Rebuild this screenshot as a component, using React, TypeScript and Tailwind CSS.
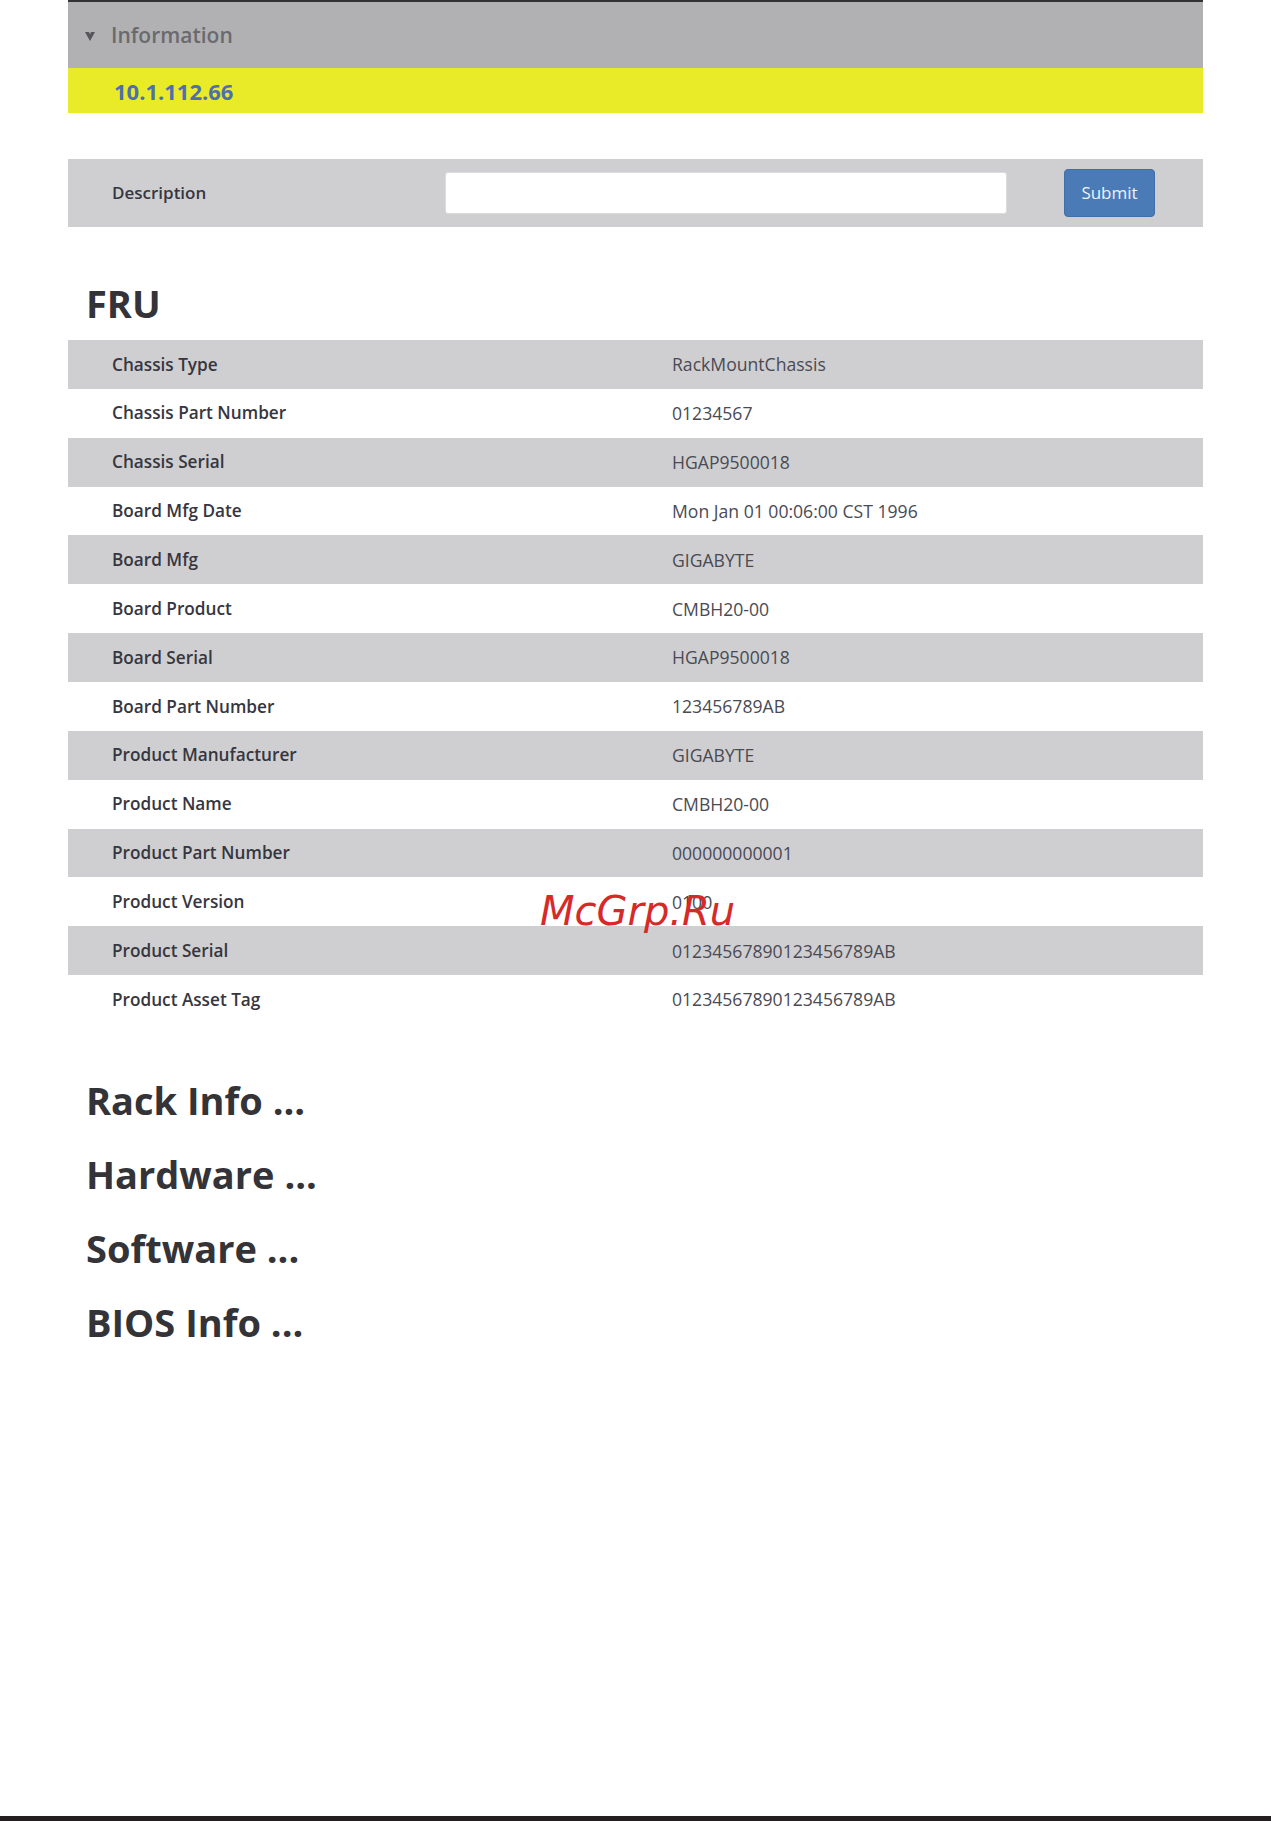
import React from "react";

const rows: [string, string][] = [
  ["Chassis Type", "RackMountChassis"],
  ["Chassis Part Number", "01234567"],
  ["Chassis Serial", "HGAP9500018"],
  ["Board Mfg Date", "Mon Jan 01 00:06:00 CST 1996"],
  ["Board Mfg", "GIGABYTE"],
  ["Board Product", "CMBH20-00"],
  ["Board Serial", "HGAP9500018"],
  ["Board Part Number", "123456789AB"],
  ["Product Manufacturer", "GIGABYTE"],
  ["Product Name", "CMBH20-00"],
  ["Product Part Number", "000000000001"],
  ["Product Version", "0100"],
  ["Product Serial", "01234567890123456789AB"],
  ["Product Asset Tag", "01234567890123456789AB"],
];

const sections = ["Rack Info ...", "Hardware ...", "Software ...", "BIOS Info ..."];

export default function App() {
  return (
    <div className="relative min-h-[1821px] w-full bg-white flex flex-col font-['Open_Sans',sans-serif]">
      <div className="ml-[68px] w-[1135px] flex flex-col">
        {/* Header */}
        <div className="h-[68px] border-t-2 border-[#333335] bg-[#b1b1b3] flex items-center pl-[17px]">
          <svg width="10" height="9" viewBox="0 0 10 9" className="mr-[16px] mt-[2px]">
            <path d="M0 0 L4 0 L5 2.5 L6 0 L10 0 L5 9 Z" fill="#55555a" />
          </svg>
          <span className="text-[21px] leading-none font-semibold text-[#6a6a6e]">Information</span>
        </div>
        {/* IP */}
        <div className="h-[45px] bg-[#e9eb29] flex items-center pl-[46px]">
          <span className="text-[22px] leading-none font-bold text-[#4e6fae]">10.1.112.66</span>
        </div>
        {/* Description */}
        <div className="mt-[46px] h-[68px] bg-[#cfcfd1] flex items-center pl-[44px]">
          <span className="w-[333px] text-[17px] font-semibold text-[#363640]">Description</span>
          <input
            type="text"
            className="w-[562px] h-[42px] bg-white rounded-[3px] border border-[#dcdcdc] outline-none"
          />
          <button className="ml-[57px] w-[91px] h-[48px] rounded-[4px] bg-[#4a7bb7] border border-[#3f6ea8] text-[17px] text-[#eef3fa]">
            Submit
          </button>
        </div>
        {/* FRU */}
        <h2 className="mt-[57px] mb-[18px] pl-[18px] text-[38px] leading-[38px] font-bold text-[#333338]">FRU</h2>
        <div className="flex flex-col">
          {rows.map(([k, v], i) => (
            <div
              key={k}
              className={`grid grid-cols-[604px_1fr] h-[48.86px] items-center ${
                i % 2 === 0 ? "bg-[#cfcfd1]" : "bg-white"
              }`}
            >
              <span className="pl-[44px] text-[17.2px] font-semibold text-[#363640]">{k}</span>
              <span className="text-[17.6px] text-[#4a4a54]">{v}</span>
            </div>
          ))}
        </div>
        {/* Sections */}
        <div className="mt-[57px] flex flex-col gap-[36px] pl-[18px]">
          {sections.map((s) => (
            <h2 key={s} className="text-[38px] leading-[38px] font-bold text-[#333338]">
              {s}
            </h2>
          ))}
        </div>
      </div>
      <div className="mt-auto h-[5px] w-full bg-[#231f20]" />
      {/* watermark */}
      <div className="absolute left-[540px] top-[891px] text-[40px] leading-[40px] italic text-[#d62a2a] font-['DejaVu_Sans',sans-serif] pointer-events-none">
        McGrp.Ru
      </div>
    </div>
  );
}
